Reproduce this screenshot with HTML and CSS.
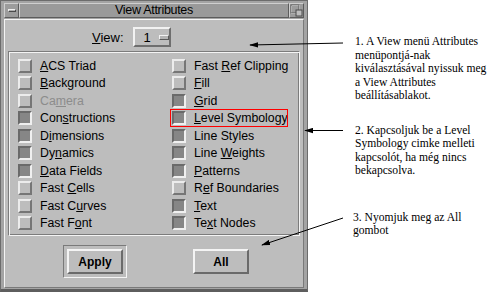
FILE: index.html
```html
<!DOCTYPE html>
<html>
<head>
<meta charset="utf-8">
<link rel="stylesheet" href="styles.css">
</head>
<body>
<div class="page">
  <div class="window">
    <div class="titlebar">
      <div class="tb-btn"><span class="min-bar"></span></div>
      <div class="title">View Attributes</div>
      <div class="tb-btn">
        <svg width="13" height="13" viewBox="0 0 13 13">
          <rect x="1.5" y="1.5" width="8" height="8" fill="none" stroke="#f2f2f2"/>
          <rect x="1" y="1" width="8" height="8" fill="none" stroke="#4a4a4a" stroke-width="0.8"/>
          <rect x="6" y="6" width="6" height="6" fill="#bdbdbd" stroke="#4a4a4a"/>
        </svg>
      </div>
    </div>
    <div class="client">
      <div class="view-row">
        <span class="view-label"><u>V</u>iew:</span>
        <div class="option"><span class="opt-val">1</span><span class="opt-ind"></span></div>
      </div>
      <div class="group">
        <div class="grid">
          <div class="cb"><span class="box"></span><span><u>A</u>CS Triad</span></div>
          <div class="cb"><span class="box"></span><span><u>B</u>ackground</span></div>
          <div class="cb disabled"><span class="box"></span><span>Ca<u>m</u>era</span></div>
          <div class="cb"><span class="box on"></span><span>Con<u>s</u>tructions</span></div>
          <div class="cb"><span class="box on"></span><span>D<u>i</u>mensions</span></div>
          <div class="cb"><span class="box on"></span><span>Dy<u>n</u>amics</span></div>
          <div class="cb"><span class="box on"></span><span><u>D</u>ata Fields</span></div>
          <div class="cb"><span class="box"></span><span>Fast <u>C</u>ells</span></div>
          <div class="cb"><span class="box"></span><span>Fast C<u>u</u>rves</span></div>
          <div class="cb"><span class="box"></span><span>Fast F<u>o</u>nt</span></div>
          <div class="cb"><span class="box"></span><span>Fast <u>R</u>ef Clipping</span></div>
          <div class="cb"><span class="box"></span><span><u>F</u>ill</span></div>
          <div class="cb"><span class="box on"></span><span><u>G</u>rid</span></div>
          <div class="cb marked"><span class="box on"></span><span><u>L</u>evel Symbology</span></div>
          <div class="cb"><span class="box on"></span><span>Line Styles</span></div>
          <div class="cb"><span class="box on"></span><span>Line <u>W</u>eights</span></div>
          <div class="cb"><span class="box on"></span><span><u>P</u>atterns</span></div>
          <div class="cb"><span class="box"></span><span>R<u>e</u>f Boundaries</span></div>
          <div class="cb"><span class="box on"></span><span><u>T</u>ext</span></div>
          <div class="cb"><span class="box on"></span><span>Te<u>x</u>t Nodes</span></div>
        </div>
      </div>
      <div class="buttons">
        <div class="default-ring"><button class="btn">Apply</button></div>
        <button class="btn btn-all">All</button>
      </div>
    </div>
  </div>
  <div class="notes">
    <p class="note note1">1. A View menü Attributes<br>menüpontjá-nak<br>kiválasztásával nyissuk meg<br>a View Attributes<br>beállításablakot.</p>
    <p class="note note2">2. Kapcsoljuk be a Level<br>Symbology cimke melleti<br>kapcsolót, ha még nincs<br>bekapcsolva.</p>
    <p class="note note3">3. Nyomjuk meg az All<br>gombot</p>
  </div>
  <svg class="arrows" width="500" height="292" viewBox="0 0 500 292">
    <defs>
      <marker id="ah" viewBox="0 0 10 6" refX="9" refY="3" markerWidth="9" markerHeight="6" orient="auto" markerUnits="userSpaceOnUse">
        <path d="M0,0 L10,3 L0,6 z" fill="#000"/>
      </marker>
    </defs>
    <line x1="343" y1="43" x2="250" y2="45" stroke="#000" stroke-width="1" marker-end="url(#ah)"/>
    <line x1="343" y1="130.5" x2="305" y2="130.5" stroke="#000" stroke-width="1" marker-end="url(#ah)"/>
    <line x1="343" y1="218" x2="262" y2="245" stroke="#000" stroke-width="1" marker-end="url(#ah)"/>
  </svg>
</div>
</body>
</html>
```
FILE: styles.css
```css
html, body {
  margin: 0;
  padding: 0;
  background: #ffffff;
}

.page {
  position: relative;
  width: 500px;
  height: 292px;
  display: flex;
  overflow: hidden;
  font-family: "Liberation Sans", Arial, sans-serif;
  font-size: 12px;
  color: #000;
}

/* ---------- window ---------- */
.window {
  box-sizing: border-box;
  width: 308px;
  height: 292px;
  flex: none;
  background: #a4a4a4;
  border: 1px solid #6c6c6c;
  border-bottom: 3px solid #5e5e5e;
  padding: 2px 3px 1px 3px;
  display: flex;
  flex-direction: column;
  gap: 1px;
}

.titlebar {
  height: 15px;
  display: flex;
  flex: none;
}

.tb-btn {
  box-sizing: border-box;
  width: 15px;
  height: 15px;
  background: #9c9c9c;
  border-top: 1px solid #cfcfcf;
  border-left: 1px solid #cfcfcf;
  border-right: 1px solid #5c5c5c;
  border-bottom: 1px solid #5c5c5c;
  display: flex;
  align-items: center;
  justify-content: center;
}

.min-bar {
  box-sizing: border-box;
  width: 8px;
  height: 3px;
  background: #b0b0b0;
  border-top: 1px solid #eeeeee;
  border-left: 1px solid #eeeeee;
  border-right: 1px solid #4a4a4a;
  border-bottom: 1px solid #4a4a4a;
}

.title {
  box-sizing: border-box;
  flex: 1;
  height: 15px;
  background: #9a9a9a;
  border-top: 1px solid #cfcfcf;
  border-left: 1px solid #cfcfcf;
  border-right: 1px solid #5c5c5c;
  border-bottom: 1px solid #5c5c5c;
  text-align: center;
  line-height: 13px;
  font-size: 12.5px;
  letter-spacing: -0.3px;
}

.client {
  box-sizing: border-box;
  flex: 1;
  background: #bdbdbd;
  border-top: 1px solid #f4f4f4;
  border-left: 1px solid #f4f4f4;
  border-right: 1px solid #7a7a7a;
  border-bottom: 1px solid #7a7a7a;
  display: flex;
  flex-direction: column;
}

u {
  text-decoration: underline;
  text-underline-offset: 1px;
}

/* ---------- view row ---------- */
.view-row {
  display: flex;
  align-items: center;
  padding: 7px 0 0 87px;
  height: 20px;
  gap: 9px;
}

.view-label {
  font-size: 13px;
}

.option {
  box-sizing: border-box;
  width: 38px;
  height: 20px;
  background: #bdbdbd;
  border-top: 2px solid #f2f2f2;
  border-left: 2px solid #f2f2f2;
  border-right: 2px solid #6e6e6e;
  border-bottom: 2px solid #6e6e6e;
  display: flex;
  align-items: center;
  padding-left: 9px;
  gap: 8px;
}

.opt-val {
  font-size: 13px;
}

.opt-ind {
  box-sizing: border-box;
  width: 10px;
  height: 5px;
  background: #b4b4b4;
  border-top: 1px solid #f2f2f2;
  border-left: 1px solid #f2f2f2;
  border-right: 1px solid #5a5a5a;
  border-bottom: 1px solid #5a5a5a;
}

/* ---------- group ---------- */
.group {
  box-sizing: border-box;
  margin: 4px 3px 0 3px;
  height: 185px;
  border-top: 1px solid #7c7c7c;
  border-left: 1px solid #7c7c7c;
  border-right: 1px solid #f4f4f4;
  border-bottom: 1px solid #f4f4f4;
  box-shadow: inset 1px 1px 0 #f4f4f4, inset -1px -1px 0 #7c7c7c;
  padding: 5px 0 0 9px;
}

.grid {
  display: grid;
  grid-auto-flow: column;
  grid-template-rows: repeat(10, 17.5px);
  grid-template-columns: 154px 1fr;
}

.cb {
  position: relative;
  display: flex;
  align-items: center;
  gap: 8px;
  white-space: nowrap;
  font-size: 12.3px;
}

.box {
  box-sizing: border-box;
  width: 14px;
  height: 14px;
  flex: none;
  background: #bdbdbd;
  border-top: 2px solid #ececec;
  border-left: 2px solid #ececec;
  border-right: 2px solid #767676;
  border-bottom: 2px solid #767676;
}

.box.on {
  background: #868686;
  border-top: 2px solid #6a6a6a;
  border-left: 2px solid #6a6a6a;
  border-right: 2px solid #f0f0f0;
  border-bottom: 2px solid #f0f0f0;
}

.cb.disabled {
  color: #8c8c8c;
}

.cb.marked::after {
  content: "";
  position: absolute;
  left: -2px;
  top: -1px;
  width: 118px;
  height: 18px;
  box-sizing: border-box;
  border: 1px solid #ff0000;
}

/* ---------- buttons ---------- */
.buttons {
  display: flex;
  align-items: center;
  padding: 9px 0 0 58px;
  gap: 66px;
}

.default-ring {
  box-sizing: border-box;
  width: 64px;
  height: 33px;
  padding: 3px;
  border-top: 1px solid #7a7a7a;
  border-left: 1px solid #7a7a7a;
  border-right: 1px solid #f4f4f4;
  border-bottom: 1px solid #f4f4f4;
}

.btn {
  box-sizing: border-box;
  width: 56px;
  height: 25px;
  margin: 0;
  padding: 0;
  background: #bdbdbd;
  border-top: 2px solid #f4f4f4;
  border-left: 2px solid #f4f4f4;
  border-right: 2px solid #6a6a6a;
  border-bottom: 2px solid #6a6a6a;
  font-family: "Liberation Sans", Arial, sans-serif;
  font-size: 12px;
  font-weight: bold;
  color: #000;
}

/* ---------- notes ---------- */
.notes {
  display: flex;
  flex-direction: column;
  padding-left: 47px;
  font-family: "Liberation Serif", "Times New Roman", serif;
  font-size: 11.6px;
  line-height: 13.5px;
  color: #000;
}

.note {
  margin: 0;
  white-space: nowrap;
}

.note1 {
  margin-top: 35px;
}

.note2 {
  margin-top: 21px;
}

.note3 {
  margin-top: 33px;
  margin-left: -2px;
}

.arrows {
  position: absolute;
  left: 0;
  top: 0;
  pointer-events: none;
}
```
